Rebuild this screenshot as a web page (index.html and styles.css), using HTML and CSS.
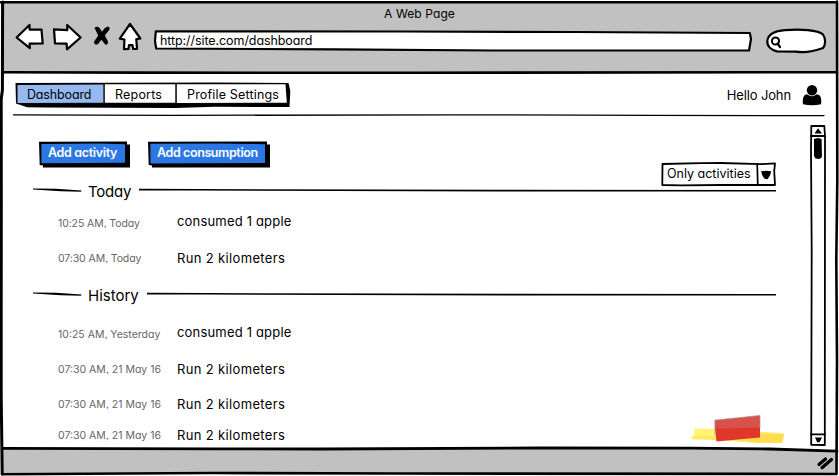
FILE: index.html
```html
<!DOCTYPE html>
<html lang="en">
<head>
<meta charset="utf-8">
<title>A Web Page</title>
<link rel="stylesheet" href="styles.css">
</head>
<body>
<div class="window">
  <svg class="sketch" viewBox="0 0 839 476">
    <path class="chrome" d="M3 2H837V72H3Z"/>
    <path class="chrome" d="M3 448L660 448L837 451L837 474H3Z"/>
    <path class="ink" stroke-width="2.6" d="M1 2.2L837 2.2M837 1.5L837.3 180L836.3 260L837 360L836.5 474"/>
    <path class="ink" stroke-width="3" d="M2.6 2L2.4 90L1.2 99L1.3 200L1.2 315L1.2 396L2.2 474"/>
    <path class="ink" stroke-width="2.6" d="M3 72.2L140 72.6L420 72.8L837 72.2"/>
    <path class="ink" stroke-width="2.8" d="M3 448.3L220 448.8L320 449L540 448L690 448.2L770 449L837 451.2"/>
    <path class="ink" stroke-width="2.6" d="M2 474.2L210 473L400 473.5L836 474"/>
  </svg>

  <header class="chrome-bar">
    <div class="title">A Web Page</div>
    <div class="toolbar">
      <svg class="nav" viewBox="12 19 135 36" width="135" height="36">
        <g class="outline">
          <path d="M16.6 37.5L29.5 25L29.6 29.6L41.5 29.5L42.7 43.5L29.6 43.6L29.8 48.2Z"/>
          <path d="M54 29.3L67.3 30.2L67.2 25L80.6 37.5L67 49.3L66.6 43.6L55 43.3Z"/>
          <path d="M130 24L140.4 38.5L136.3 39.2L137 49L133.2 49L132.5 45.2L129 45.2L128.5 49L124 49.2L124.4 39.5L119.8 38.6Z"/>
        </g>
        <path d="M94.5 28Q97 25.4 99.5 28L102 31.8Q104.5 27.5 107.5 26.5Q110.3 27 109.5 29.5L104.8 35.6L108 41.5Q108.2 45 105.3 44.6L101.4 39.8L97.8 44.2Q94 45.4 94 41.8L98.2 35.6Z"/>
      </svg>
      <div class="url">
        <svg class="sketch" viewBox="0 0 598 22"><path class="outline" d="M1.8 1.3L250 1.5L420 2L595.8 3L597 9L595 20.5L340 20.5L180 19.4L2.2 18.5L1 11Z"/></svg>
        <span>http://site.com/dashboard</span>
      </div>
      <svg class="search" viewBox="765 27 62 28" width="62" height="28">
        <path class="outline" d="M767.3 41C768 34 775 31 785 30.2C800 28.8 818 30 823 34.5C826 39 825.6 45 823 48C815 51 805 53 796 51.6L777 51.4C771 50 767 46 767.3 41Z"/>
        <circle class="ink" stroke-width="2" cx="775.5" cy="41" r="3.6"/>
        <path class="ink" stroke-width="2.2" d="M777.5 43.5L780 47"/>
      </svg>
    </div>
  </header>

  <div class="page">
    <div class="top">
      <nav class="tabs">
        <svg class="sketch" viewBox="0 0 276 27">
          <path fill="#000" d="M.5 1L200 .5L273.5 1L275.3 9L274.5 25L200 24.8L160 26L30 25.4L12 25.2L1 21.5Z"/>
          <path fill="#96baf0" d="M2.5 3L88.4 2.4V20.7L2.5 21Z"/>
          <path fill="#fff" d="M89.8 2.3L160.3 2.3V20.8H89.8ZM161.8 2.3L270.5 2.2L271.8 20.7L161.8 21Z"/>
        </svg>
        <a class="dash">Dashboard</a><a class="reports">Reports</a><a class="profile">Profile Settings</a>
      </nav>
      <div class="user">
        <span>Hello John</span>
        <svg viewBox="802 84 20 22" width="20" height="22"><circle cx="812" cy="90.3" r="5.2"/><path d="M803 104.3C802.3 99 803.3 94.5 807 94.2Q812 98.5 816.8 94.2C821 94.5 821.8 99 821 104.3Q812 106.2 803 104.3Z"/></svg>
      </div>
    </div>
    <svg class="rule" viewBox="0 0 812 4" width="812" height="4"><path class="ink" stroke-width="1.3" d="M.5 .9L160 1.4L440 .8L640 1.4L811 1.6"/></svg>

    <div class="body">
      <main>
        <div class="actions">
          <button class="btn activity"><svg class="sketch" viewBox="0 0 91 27"><path fill="#000" d="M0 .8L88 .5V3.5H91V26.5H4V24.4L.7 24Z"/><path fill="#2b78e4" d="M2.4 3L60 2.5L86 3.2V21.8L2.4 22.2Z"/></svg><span>Add activity</span></button>
          <button class="btn consumption"><svg class="sketch" viewBox="0 0 122 27"><path fill="#000" d="M0 .8L119 .5V3.5H122V26.5H4V24.4L.7 24Z"/><path fill="#2b78e4" d="M2.4 2.8L70 2.5L117 3.2V22L2.4 22.4Z"/></svg><span>Add consumption</span></button>
          <div class="select">
            <svg class="sketch" viewBox="0 0 116 25"><path class="outline thin" d="M1.5 2L40 1.2L60 1L100 2.2L114 1.3L113.2 9L114 23L60 23L20 23.4L1.3 23Z"/><path class="ink" stroke-width="1.7" d="M96.2 2L96.8 23"/><path d="M100.2 9.3Q105 8.2 110.2 9.2Q110 13 106.5 17.2L103.7 16.8Q100.5 13 100.2 9.3Z"/></svg>
            <span>Only activities</span>
          </div>
        </div>

        <h2 class="today"><svg class="lead" viewBox="0 0 49 5" width="49" height="5"><path d="M0 .6L23 .8L48.5 2.4L48 3.8L28 3.2L0 1.5Z"/></svg><span>Today</span><svg class="tail" viewBox="0 0 637 5" preserveAspectRatio="none"><path class="ink" stroke-width="1.6" d="M0 1.6L60 1.8L360 2.6L637 2.7"/></svg></h2>
        <ul class="list-today">
          <li class="low"><time>10:25 AM, Today</time><span class="apple">consumed 1 apple</span></li>
          <li><time>07:30 AM, Today</time><span>Run 2 kilometers</span></li>
        </ul>
        <h2 class="history"><svg class="lead" viewBox="0 0 49 5" width="49" height="5"><path d="M0 .6L23 .8L48.5 2.4L48 3.8L28 3.2L0 1.5Z"/></svg><span>History</span><svg class="tail" viewBox="0 0 629 5" preserveAspectRatio="none"><path class="ink" stroke-width="1.6" d="M0 1.6L60 1.8L360 2.6L629 2.7"/></svg></h2>
        <ul class="list-history">
          <li class="low"><time>10:25 AM, Yesterday</time><span class="apple">consumed 1 apple</span></li>
          <li><time>07:30 AM, 21 May 16</time><span>Run 2 kilometers</span></li>
          <li><time>07:30 AM, 21 May 16</time><span>Run 2 kilometers</span></li>
          <li><time>07:30 AM, 21 May 16</time><span>Run 2 kilometers</span></li>
        </ul>
      </main>
      <svg class="scroll" viewBox="809 124 18 324" width="18" height="324">
        <path class="outline thin" d="M811.3 126L824.3 126L825 136L824.8 445L811.2 444.8L811.7 250L811 150Z"/>
        <path class="ink" stroke-width="1.8" d="M811 136L825 136M811 434.3L825 434.3"/>
        <path d="M814.5 133.5L818 128.3L822 133.5ZM815 437.5H822L819.6 442.3H817.2Z"/>
        <path d="M814 139L818 138L821.6 139L822 157L819.5 159L815.5 158.4L814 156Z"/>
      </svg>
    </div>
  </div>

  <svg class="marker" viewBox="690 414 96 30" width="96" height="30">
    <path fill="#fff36f" d="M694.5 428.5L718 429L716 436L694 436Z"/>
    <path fill="#ffe95c" d="M692 436L715 436L760 432L784.5 433.5L782 443L755 443L725 440.5L691.5 439Z"/>
    <path fill="#ffdc50" d="M758 434L784 434L782 442.5L745 442Z"/>
    <path fill="#d8514b" d="M715 420L760 415.5V428L715 429.5Z"/>
    <path fill="#e0362c" d="M715 428.5L760 427.5L760 437.5L716.5 441.5Z"/>
    <path fill="none" stroke="#a99" stroke-width=".7" d="M715 435L714.7 420.2L760 415.4V428"/>
  </svg>
  <svg class="grip" viewBox="816 455 18 16" width="18" height="16"><path class="ink" stroke-width="3.2" d="M819 464.5L825.5 459M822 467.8L831.5 459.5"/></svg>
</div>
</body>
</html>
```
FILE: styles.css
```css
* { box-sizing: border-box; }
body {
  margin: 0;
  background: #fff;
  color: #000;
  font: 13px/16px Inter, "Open Sans", sans-serif;
  font-feature-settings: "cv11", "ss03";
}
svg { display: block; flex: none; }
.window { position: relative; width: 839px; height: 476px; overflow: hidden; isolation: isolate; }
.sketch { position: absolute; inset: 0; width: 100%; height: 100%; z-index: -1; }
.chrome { fill: #c1c1c1; }
.ink { fill: none; stroke: #000; stroke-linecap: round; stroke-linejoin: round; }
.outline, .outline path { fill: #fff; stroke: #000; stroke-width: 2.2; stroke-linejoin: round; }
.outline.thin { stroke-width: 1.8; }

.chrome-bar { height: 72px; padding-top: 6px; }
.title { text-align: center; font-size: 12px; letter-spacing: .1px; }
.toolbar { display: flex; padding-left: 12px; }
.nav { margin-top: -3px; }
.url { position: relative; width: 598px; height: 22px; margin: 8px 0 0 7px; padding: 3px 0 0 6px; font-size: 12.5px; letter-spacing: -.08px; }
.search { margin: 5px 0 0 13px; }

.page { height: 376px; padding-top: 10px; }
.top { display: flex; justify-content: space-between; height: 32px; padding: 0 17px 0 15px; }
.tabs { position: relative; display: flex; width: 276px; height: 27px; padding-top: 5px; font-size: 12.5px; }
.dash { width: 89px; padding-left: 12px; letter-spacing: -.15px; }
.reports { width: 72px; padding-left: 11px; letter-spacing: .2px; }
.profile { padding-left: 11px; letter-spacing: .17px; white-space: nowrap; }
.user { display: flex; gap: 11px; padding-top: 2px; }
.user span { padding-top: 3px; letter-spacing: -.12px; }
.rule { margin-left: 13px; }

.body { display: flex; height: 330px; }
main { width: 809px; padding-top: 23px; }
.scroll { margin-top: 6px; }
.actions { display: flex; padding-left: 39px; height: 46px; }
.btn { position: relative; display: flex; align-items: flex-start; height: 27px; padding: 4px 0 0 9px; border: 0; background: none; color: #fff; font: 600 12.5px/16px Inter, sans-serif; font-feature-settings: "cv11", "ss03"; white-space: nowrap; }
.activity { width: 91px; letter-spacing: -.33px; }
.consumption { width: 122px; margin-left: 18px; letter-spacing: -.4px; }
.select { position: relative; width: 116px; height: 25px; margin: 21px 0 0 391px; padding: 4px 0 0 6px; font-size: 12.5px; }

h2 { display: flex; height: 20px; margin: 0; padding-left: 33px; font-size: 15px; font-weight: 400; line-height: 20px; }
h2 .lead, h2 .tail { margin-top: 6px; }
h2 .tail { height: 5px; }
.today { margin-top: -5px; }
.today span { width: 57px; padding-left: 6px; letter-spacing: -.2px; }
.today .tail { width: 637px; }
.history span { width: 65px; padding-left: 6px; }
.history .tail { width: 629px; }
.history { margin-top: 20px; }

ul { margin: 0; padding: 0 0 0 58px; list-style: none; }
li { display: grid; grid-template-columns: 119px 1fr; height: 16px; margin-top: 21px; letter-spacing: .35px; }
li .apple { letter-spacing: .18px; }
time { padding-top: 1px; color: #666; font-size: 10.5px; letter-spacing: 0; }
.list-today time { letter-spacing: -.1px; }
.low time { padding-top: 3px; }
.list-today li:first-child { margin-top: 11px; }
.list-history li:first-child { margin-top: 18px; }
.list-history li:nth-child(3) { margin-top: 19px; }
.list-history li:nth-child(4) { margin-top: 15px; }

.marker { position: absolute; left: 690px; top: 414px; }
.grip { position: absolute; left: 816px; top: 455px; }
```
